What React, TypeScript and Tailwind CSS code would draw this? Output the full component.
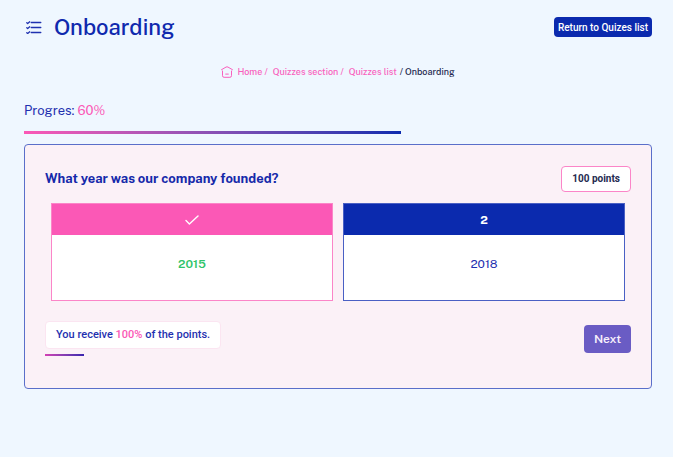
import clsx from "clsx";

const CRUMBS = [
  { label: "Home", href: "#home" },
  { label: "Quizzes section", href: "#quizzes" },
  { label: "Quizzes list", href: "#list" },
];

const ANSWERS = [
  { id: 1, text: "2015", correct: true },
  { id: 2, text: "2018", correct: false },
];

function ChecklistIcon() {
  return (
    <svg viewBox="0 0 16 14" className="h-3.5 w-4" fill="none" stroke="currentColor" strokeLinecap="round" strokeLinejoin="round" aria-hidden="true">
      <path strokeWidth="1.3" d="M5.2 2.5h9.6M5.2 7.5h9.6M5.2 12.5h9.6" />
      <path strokeWidth="1.3" d="M.8 2.7l.9.8L3.7 1.8M.8 7.7l.9.8 2-1.7M.8 12.7l.9.8 2-1.7" />
    </svg>
  );
}

function HomeIcon() {
  return (
    <svg viewBox="0 0 12 12" className="size-3" fill="none" stroke="currentColor" strokeLinecap="round" strokeLinejoin="round" aria-hidden="true">
      <path d="M.5 3.7L5 1.1a2 2 0 0 1 2 0l4.5 2.6M1.5 5v4.7a1.6 1.6 0 0 0 1.6 1.6h5.8a1.6 1.6 0 0 0 1.6-1.6V5M4.7 8.1h2.6" />
    </svg>
  );
}

function CheckIcon() {
  return (
    <svg viewBox="0 0 14 10" className="h-2.5 w-3.5" fill="none" stroke="currentColor" strokeWidth="1.4" strokeLinecap="round" strokeLinejoin="round" role="img" aria-label="Correct">
      <path d="M1 5.6l3.4 3.3L13 .9" />
    </svg>
  );
}

function Answer({ id, text, correct }: { id: number; text: string; correct: boolean }) {
  return (
    <button
      type="button"
      aria-pressed={correct}
      className={clsx(
        "flex flex-col border bg-white",
        correct ? "border-[#fb85c8]" : "border-[#4a60c4]"
      )}
    >
      <span
        className={clsx(
          "flex h-[31px] w-full items-center justify-center text-xs font-bold text-white",
          correct ? "bg-[#fb58b6]" : "bg-[#0b2aae]"
        )}
      >
        {correct ? <CheckIcon /> : id}
      </span>
      <span
        className={clsx(
          "w-full px-4 pt-[21px] pb-[27px] text-xs leading-[17px]",
          correct ? "font-semibold text-[#2fc46a]" : "text-[#1f31b0]"
        )}
      >
        {text}
      </span>
    </button>
  );
}

export default function App() {
  return (
    <main className="min-h-screen bg-[#eff7ff] pt-3 pr-[21px] pb-6 pl-6 font-['Public_Sans','Inter',sans-serif] text-[#1f31b0]">
      <header className="flex items-center justify-between">
        <div className="flex items-center gap-3 pl-0.5">
          <ChecklistIcon />
          <h1 className="text-[22px] leading-[30px] font-medium text-[#0f29ae]">Onboarding</h1>
        </div>
        <button type="button" className="h-5 rounded bg-[#0b2aae] px-1 font-['Roboto',sans-serif] text-[10px] font-medium text-white">
          Return to Quizes list
        </button>
      </header>

      <nav aria-label="Breadcrumb" className="mt-[22px] flex items-center justify-center text-[9px] leading-4 font-medium">
        <span className="mr-1 text-[#f95fbd]">
          <HomeIcon />
        </span>
        {CRUMBS.map(({ label, href }, i) => (
          <a key={href} href={href} className={clsx("text-[#f95fbd]", i < CRUMBS.length - 1 ? "mr-[5px]" : "mr-[3px]")}>
            {label}
            {i < CRUMBS.length - 1 && " /"}
          </a>
        ))}
        <span aria-current="page" className="text-[#252a50]">/ Onboarding</span>
      </nav>

      <section className="mt-[22px]">
        <p className="text-[13px] leading-[18px]">
          Progres: <span className="text-[#fb58b6]">60%</span>
        </p>
        <div role="progressbar" aria-label="Progress" aria-valuenow={60} className="mt-[11px]">
          <div className="h-[3px] w-3/5 bg-linear-to-r from-[#fb58b6] to-[#0b2aae]" />
        </div>
      </section>

      <section className="mt-2.5 rounded border border-[#5a6fca] bg-[#fbf1f7] px-5 pt-[21px] pb-8">
        <div className="flex items-center justify-between">
          <h2 className="text-[13px] leading-5 font-bold text-[#1529aa]">What year was our company founded?</h2>
          <span className="rounded border border-[#fb85c8] bg-white px-2.5 py-1 font-['Roboto',sans-serif] text-[10px] leading-4 font-bold text-[#252a50]">
            100 points
          </span>
        </div>

        <div className="mt-[11px] grid grid-cols-2 gap-2.5 px-1.5">
          {ANSWERS.map((answer) => (
            <Answer key={answer.id} {...answer} />
          ))}
        </div>

        <div className="mt-5 flex items-center justify-between">
          <div>
            <p className="rounded border border-[#fbe5f1] bg-white px-2.5 py-1 font-['Roboto',sans-serif] text-[11px] leading-[18px] font-medium">
              You receive <span className="text-[#fb58b6]">100%</span> of the points.
            </p>
            <div className="mt-[5px] h-0.5 w-[39px] bg-linear-to-r from-[#d340b4] to-[#3a24ae]" />
          </div>
          <button type="button" className="h-7 rounded bg-[#6a5cc4] px-2.5 text-xs font-semibold text-[#f6effb]">
            Next
          </button>
        </div>
      </section>
    </main>
  );
}
